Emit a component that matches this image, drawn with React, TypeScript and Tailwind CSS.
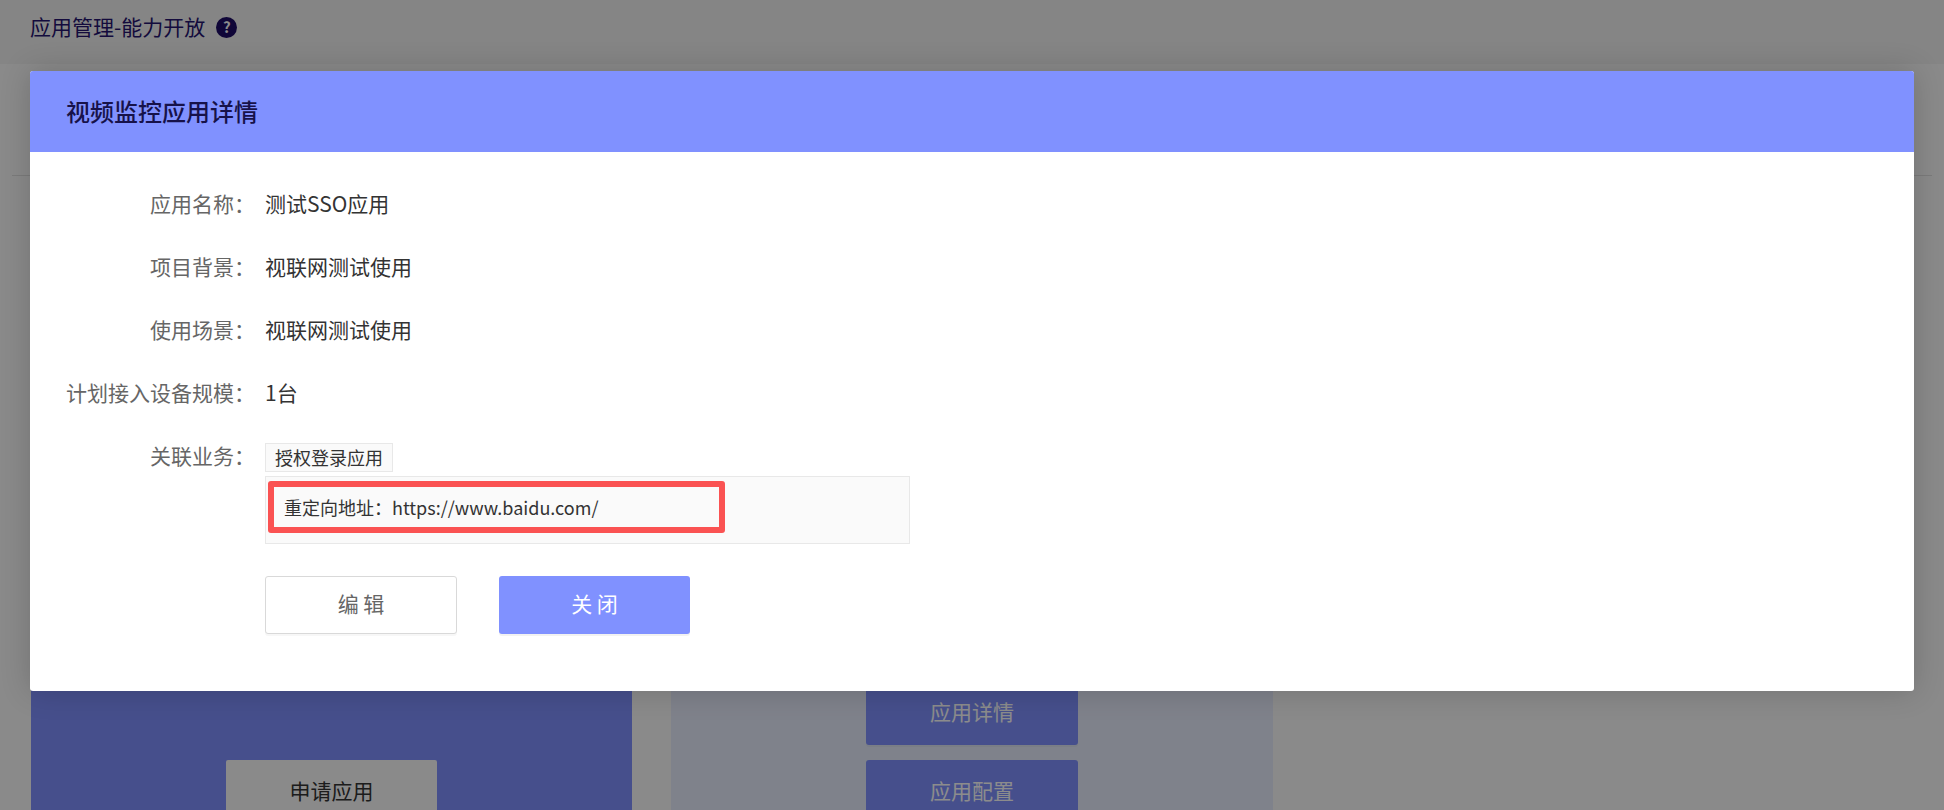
import React from 'react';

const rows = [
  { label: '应用名称', value: '测试SSO应用' },
  { label: '项目背景', value: '视联网测试使用' },
  { label: '使用场景', value: '视联网测试使用' },
  { label: '计划接入设备规模', value: '1台' },
];

const font = { fontFamily: '"Noto Sans CJK SC", "Noto Sans", sans-serif' };

const App: React.FC = () => {
  return (
    <div className="relative h-[810px] w-full overflow-hidden bg-[#fbfbfb]" style={font}>
      <div className="flex h-16 items-center gap-[11px] bg-[#f2f2f2] px-[30px] pb-[10px]">
        <span className="text-[21px] text-[#261470]">应用管理-能力开放</span>
        <span className="flex h-[21px] w-[21px] items-center justify-center rounded-full bg-[#1e0c66] text-[15px] font-bold text-white">?</span>
      </div>

      <div className="px-3 pt-[111px]">
        <div className="h-px bg-[#e0e0e0]" />
      </div>

      <div className="flex gap-[39px] px-[31px] pt-6">
        <div className="flex h-[700px] w-[601px] flex-col items-center bg-[#8091ff] pt-[560px]">
          <button className="h-16 w-[211px] rounded-[2px] bg-[#fbfbfb] pb-[3px] text-[21px] font-normal text-[#333]">申请应用</button>
        </div>
        <div className="flex h-[700px] w-[602px] flex-col items-center gap-[15px] bg-[#e7edfd] pt-[481px]">
          <button className="h-16 w-[212px] rounded-[3px] bg-[#8091ff] pb-[3px] text-[21px] text-white shadow-[0_2px_0_rgba(0,0,0,0.03)]">应用详情</button>
          <button className="h-16 w-[212px] rounded-[3px] bg-[#8091ff] pb-[3px] text-[21px] text-white shadow-[0_2px_0_rgba(0,0,0,0.03)]">应用配置</button>
        </div>
      </div>

      <div className="absolute inset-0 bg-black/45" />

      <div className="absolute left-[30px] top-[71px] h-[620px] w-[1884px] overflow-hidden rounded-[3px] bg-white shadow-[0_0_30px_rgba(0,0,0,0.18)]">
        <div className="flex h-[81px] items-center bg-[#8091ff] px-[36px] pb-[2px] text-[24px] font-medium text-[#17124a]">视频监控应用详情</div>

        <div className="pt-[22px]">
          {rows.map((row) => (
            <div key={row.label} className="flex h-[63px] items-center pb-[3px] text-[21px]">
              <div className="w-[225px] shrink-0 text-right text-[#666]">{row.label}：</div>
              <div className="pl-[10px] text-[#333]">{row.value}</div>
            </div>
          ))}

          <div className="flex text-[21px]">
            <div className="w-[225px] shrink-0 pt-[14px] text-right text-[#666]">关联业务：</div>
            <div className="pl-[10px] pt-[17px]">
              <div className="flex h-[29px] w-[128px] items-center justify-center border border-[#e8e8e8] bg-[#fafafa] pb-px text-[18px] text-[#333]">授权登录应用</div>
              <div className="mt-1 h-[68px] w-[645px] border border-[#e8e8e8] bg-[#fafafa] pl-[2px] pt-1">
                <div className="flex h-[52px] w-[457px] items-center rounded-[3px] border-[6px] border-[#fa5252] pl-[10px] text-[18px] text-[#333]">重定向地址：https://www.baidu.com/</div>
              </div>
              <div className="mt-8 flex gap-[42px]">
                <button className="h-[58px] w-[192px] rounded-[3px] border border-[#d9d9d9] bg-white pb-[3px] text-[21px] text-[#666] shadow-[0_2px_0_rgba(0,0,0,0.03)]">编 辑</button>
                <button className="h-[58px] w-[191px] rounded-[3px] bg-[#8091ff] pb-[3px] text-[21px] text-white shadow-[0_2px_0_rgba(0,0,0,0.05)]">关 闭</button>
              </div>
            </div>
          </div>
        </div>
      </div>
    </div>
  );
};

export default App;
